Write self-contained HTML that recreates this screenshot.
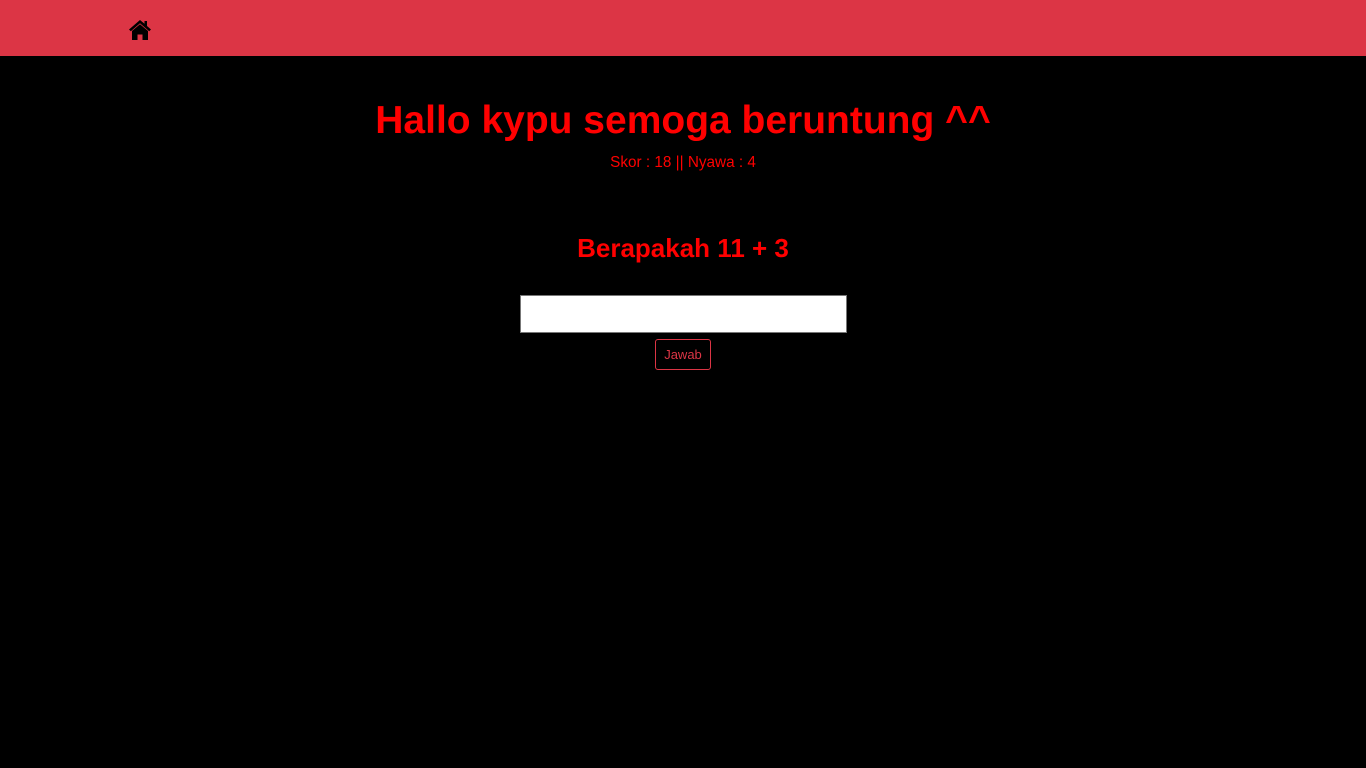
<!DOCTYPE html>
<html><head><meta charset="utf-8"><style>
*{margin:0;padding:0;box-sizing:border-box}
body{width:1366px;height:768px;background:#000;font-family:"Liberation Sans",sans-serif;color:#f00;position:relative;overflow:hidden}
.nav{position:absolute;left:0;top:0;width:1366px;height:56px;background:#dc3545}
.home{position:absolute;left:128px;top:19px}
.t{position:absolute;left:0;width:1366px;text-align:center;white-space:nowrap}
h1{top:99px;font-size:39px;font-weight:bold}
.s{top:154px;font-size:15.3px}
h2{top:233px;font-size:26px;font-weight:bold}
.in{position:absolute;left:520px;top:295px;width:327px;height:38px;background:#fff;border:1px solid #777}
.btn{position:absolute;left:655px;top:339px;width:56px;height:31px;border:1px solid #dc3545;border-radius:3px;color:#dc3545;font-size:13px;text-align:center;line-height:30px}
</style></head><body>
<div class="nav"><svg class="home" width="24" height="22" viewBox="0 0 24 22"><path d="M12 1 L1 10.5 L2.8 12.3 L12 4.3 L21.2 12.3 L23 10.5 L19 7 V2 H16.5 V4.8 Z" fill="#000"/><path d="M4 12 L12 5.3 L20 12 V21 H14.5 V15.5 H9.5 V21 H4 Z" fill="#000"/></svg></div>
<h1 class="t">Hallo kypu semoga beruntung ^^</h1>
<div class="t s">Skor : 18 || Nyawa : 4</div>
<h2 class="t">Berapakah 11 + 3</h2>
<div class="in"></div>
<div class="btn">Jawab</div>
</body></html>
